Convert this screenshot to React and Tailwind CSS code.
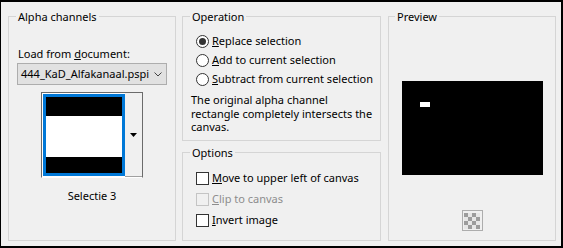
import React from 'react';

const font = { fontFamily: '"Noto Sans", "Liberation Sans", sans-serif' };

function Radio({ checked, children }) {
  return (
    <div className="flex items-center h-[19px] gap-[3px]">
      <div className="w-[13px] h-[13px] rounded-full border border-[#333] bg-white flex items-center justify-center">
        {checked && <div className="w-[7px] h-[7px] rounded-full bg-[#333]" />}
      </div>
      <span>{children}</span>
    </div>
  );
}

function Check({ disabled, children }) {
  return (
    <div className={`flex items-center h-[21px] gap-[3px] ${disabled ? 'text-[#8d8d8d]' : ''}`}>
      <div
        className={`w-[13px] h-[13px] border ${
          disabled ? 'border-[#c4c4c4] bg-[#f0f0f0]' : 'border-[#333] bg-white'
        }`}
      />
      <span>{children}</span>
    </div>
  );
}

function Group({ title, className, legendClass, children }) {
  return (
    <fieldset className={`border border-[#d5d5d5] ${className}`}>
      <legend className={`px-[2px] leading-[15px] ${legendClass}`}>{title}</legend>
      {children}
    </fieldset>
  );
}

export default function App() {
  return (
    <div className="w-[563px] h-[248px] bg-black pt-[2px] pl-[1px]" style={font}>
      <div className="w-[560px] h-[244px] bg-[#f0f0f0] flex pl-[7px] pt-[7px] text-[11px] text-black">
        {/* Alpha channels */}
        <Group title="Alpha channels" className="w-[168px] h-[232px]" legendClass="ml-[7px]">
          <div className="mt-[22px] pl-[9px] leading-[15px]">
            Load from <span className="underline">d</span>ocument:
          </div>
          <div className="mt-[2px] ml-[8px] w-[150px] h-[22px] border border-[#adadad] bg-[#e1e1e1] flex items-center pl-[3px] pr-[4px]">
            <span className="flex-1">444_KaD_Alfakanaal.pspi</span>
            <svg width="8" height="5" viewBox="0 0 8 5">
              <polyline points="0.5,0.5 4,4 7.5,0.5" fill="none" stroke="#444" strokeWidth="1" />
            </svg>
          </div>
          <div className="mx-auto mt-[7px] w-[102px] flex border-l border-t border-r border-[#6b6b6b] border-b border-b-white bg-white">
            <div className="pl-[1px] pt-[1px] pb-[1px]">
              <div className="w-[82px] h-[82px] border-[3px] border-[#0078d7] flex flex-col">
                <div className="h-[19px] bg-black" />
                <div className="h-[41px] bg-white" />
                <div className="flex-1 bg-black" />
              </div>
            </div>
            <div className="flex-1 bg-[#f0f0f0] border-b border-[#a0a0a0] flex items-center justify-center">
              <svg width="7" height="4" viewBox="0 0 7 4">
                <polygon points="0,0 7,0 3.5,4" fill="#000" />
              </svg>
            </div>
          </div>
          <div className="mt-[10px] text-center leading-[15px]">Selectie 3</div>
        </Group>

        {/* Operation / Options */}
        <div className="ml-[6px] w-[199px] flex flex-col">
          <Group title="Operation" className="h-[132px]" legendClass="ml-[7px]">
            <div className="mt-[8px] pl-[13px]">
              <Radio checked>
                <span className="underline">R</span>eplace selection
              </Radio>
              <Radio>
                <span className="underline">A</span>dd to current selection
              </Radio>
              <Radio>
                <span className="underline">S</span>ubtract from current selection
              </Radio>
            </div>
            <p className="mt-[4px] pl-[8px] pr-[6px] leading-[13.5px]">
              The original alpha channel rectangle completely intersects the canvas.
            </p>
          </Group>
          <Group title="Options" className="mt-[4px] h-[96px]" legendClass="ml-[7px]">
            <div className="mt-[8px] pl-[13px]">
              <Check>
                <span className="underline">M</span>ove to upper left of canvas
              </Check>
              <Check disabled>
                <span className="underline">C</span>lip to canvas
              </Check>
              <Check>
                <span className="underline">I</span>nvert image
              </Check>
            </div>
          </Group>
        </div>

        {/* Preview */}
        <Group title="Preview" className="ml-[7px] w-[168px] h-[232px]" legendClass="ml-[6px]">
          <div className="mx-auto mt-[57px] w-[141px] h-[94px] bg-black pt-[21px] pl-[18px]">
            <div className="w-[10px] h-[5px] bg-white" />
          </div>
          <div className="mx-auto mt-[35px] w-[21px] h-[21px] border border-[#adadad] bg-[#f0f0f0] flex items-center justify-center">
            <svg width="16" height="16" viewBox="0 0 16 16">
              <rect width="16" height="16" fill="#e6e6e6" />
              <rect x="0" y="0" width="4" height="4" fill="#9c9c9c" />
              <rect x="8" y="0" width="4" height="4" fill="#9c9c9c" />
              <rect x="4" y="4" width="4" height="4" fill="#9c9c9c" />
              <rect x="12" y="4" width="4" height="4" fill="#9c9c9c" />
              <rect x="0" y="8" width="4" height="4" fill="#9c9c9c" />
              <rect x="8" y="8" width="4" height="4" fill="#9c9c9c" />
              <rect x="4" y="12" width="4" height="4" fill="#9c9c9c" />
              <rect x="12" y="12" width="4" height="4" fill="#9c9c9c" />
            </svg>
          </div>
        </Group>
      </div>
    </div>
  );
}
